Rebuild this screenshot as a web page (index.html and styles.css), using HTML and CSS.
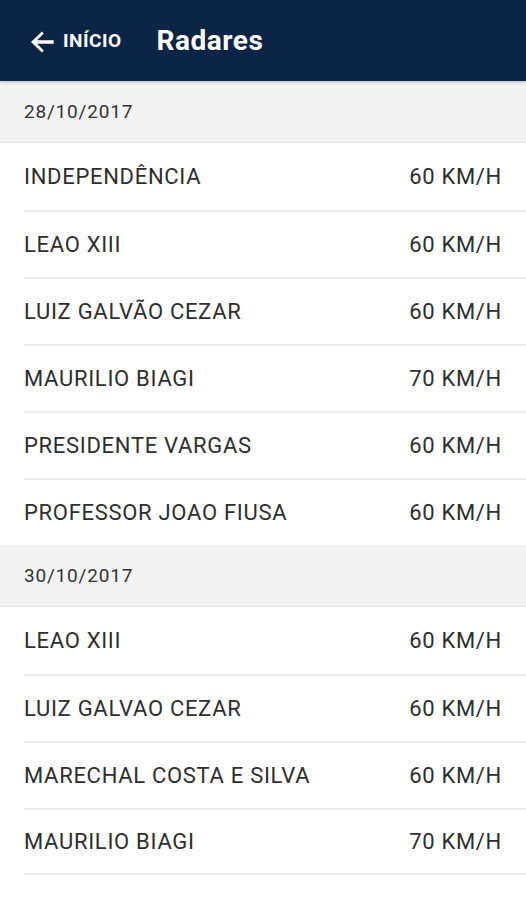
FILE: index.html
```html
<!DOCTYPE html>
<html lang="pt-BR">
<head>
  <meta charset="UTF-8">
  <title>Radares</title>
  <link rel="stylesheet" href="styles.css">
</head>
<body>

<div class="toolbar">
  <div class="back">
    <svg class="back-icon" viewBox="0 0 24 24" width="24" height="24">
      <path d="M20 10.7H7.5l5.1-5.1L11.2 4.2 3 12l8.2 7.8 1.4-1.4-5.1-5.1H20z" fill="#fff"/>
    </svg>
    <span class="back-label">INÍCIO</span>
  </div>
  <div class="title">Radares</div>
</div>

<!-- Lista por data -->
<div class="section">
  <div class="section-date">28/10/2017</div>
  <ul class="list">
    <li><span class="street">INDEPENDÊNCIA</span><span class="speed">60 KM/H</span></li>
    <li><span class="street">LEAO XIII</span><span class="speed">60 KM/H</span></li>
    <li><span class="street">LUIZ GALVÃO CEZAR</span><span class="speed">60 KM/H</span></li>
    <li><span class="street">MAURILIO BIAGI</span><span class="speed">70 KM/H</span></li>
    <li><span class="street">PRESIDENTE VARGAS</span><span class="speed">60 KM/H</span></li>
    <li><span class="street">PROFESSOR JOAO FIUSA</span><span class="speed">60 KM/H</span></li>
  </ul>
</div>

<div class="section">
  <div class="section-date">30/10/2017</div>
  <ul class="list last">
    <li><span class="street">LEAO XIII</span><span class="speed">60 KM/H</span></li>
    <li><span class="street">LUIZ GALVAO CEZAR</span><span class="speed">60 KM/H</span></li>
    <li><span class="street">MARECHAL COSTA E SILVA</span><span class="speed">60 KM/H</span></li>
    <li><span class="street">MAURILIO BIAGI</span><span class="speed">70 KM/H</span></li>
  </ul>
</div>

</body>
</html>
```

FILE: styles.css
```css
* {
  margin: 0;
  padding: 0;
  box-sizing: border-box;
}

html, body {
  height: 100%;
  font-family: Roboto, "Liberation Sans", sans-serif;
  background-color: #fff;
  color: #2e2e2e;
  overflow: hidden;
}

.toolbar {
  height: 81px;
  background-color: #0c2446;
  color: #fff;
  display: flex;
  align-items: center;
  padding-left: 27px;
  box-shadow: 0 1px 3px rgba(0, 0, 0, 0.25);
  position: relative;
}

.back {
  display: flex;
  align-items: center;
}

.back-icon {
  width: 32px;
  height: 32px;
  margin-top: 2px;
}

.back-label {
  font-size: 19px;
  font-weight: bold;
  letter-spacing: 0.5px;
  margin-left: 4px;
}

.title {
  font-size: 28px;
  font-weight: bold;
  letter-spacing: 0.5px;
  margin-left: 35px;
}

.section-date {
  height: 62px;
  background-color: #f3f3f3;
  border-bottom: 1px solid #e4e4e4;
  display: flex;
  align-items: center;
  padding-left: 24px;
  font-size: 19px;
  letter-spacing: 0.8px;
  color: #333;
}

.list {
  list-style: none;
}

.list li {
  height: 67px;
  margin-left: 24px;
  padding-right: 24px;
  display: flex;
  justify-content: space-between;
  align-items: center;
  font-size: 22px;
  letter-spacing: 0.7px;
}

.list li + li {
  border-top: 2px solid #ececec;
}

.list.last li:last-child {
  border-bottom: 2px solid #ececec;
}
```
